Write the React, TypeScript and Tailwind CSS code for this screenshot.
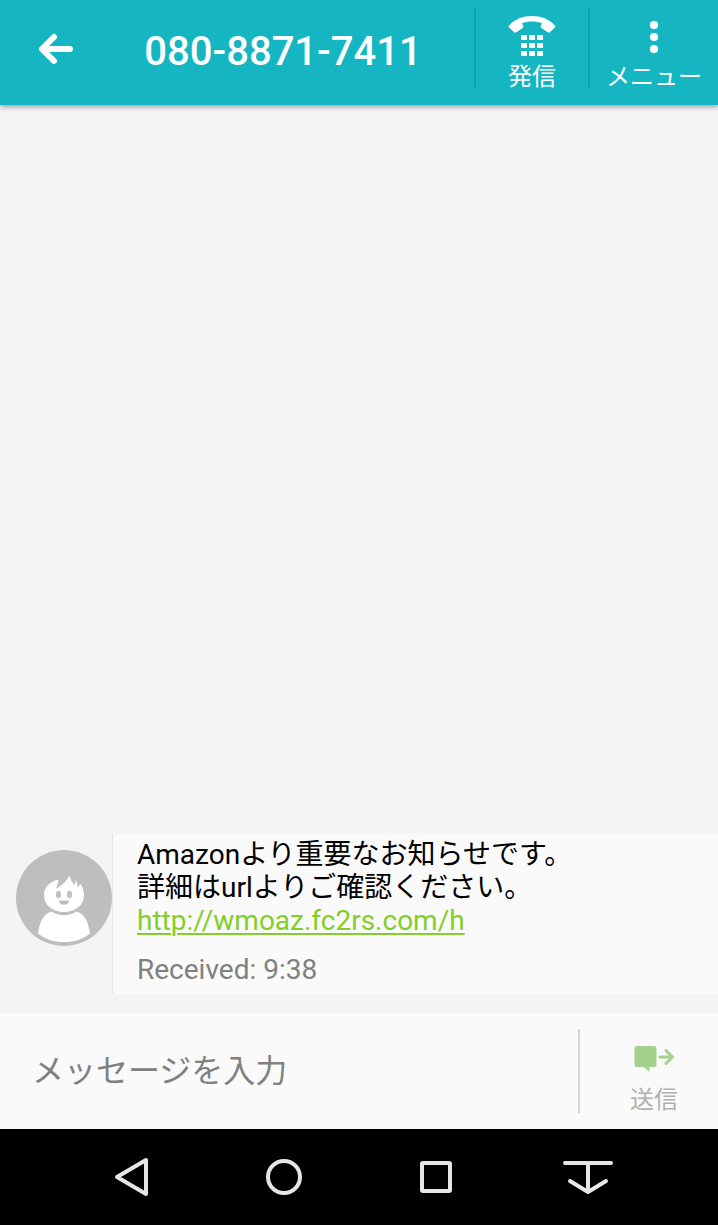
import type { ReactNode } from 'react'

function BackIcon() {
  return (
    <svg className="shrink-0" width="36" height="32" viewBox="0 0 36 32" fill="none" stroke="currentColor" strokeWidth="6" strokeLinecap="round" strokeLinejoin="round" aria-hidden="true">
      <path d="M16 4 4 16l12 12M5 16h27" />
    </svg>
  )
}

function CallIcon() {
  return (
    <svg className="shrink-0" width="48" height="42" viewBox="0 0 48 42" fill="currentColor" aria-hidden="true">
      <path d="M1 9.500C7 3 15 0 24 0s17 3 23 9.500c.6.7.6 1.400-.1 2l-4.800 4.600c-.8.7-1.700.7-2.500.1L33.500 12c-.9-.6-1.100-1.500-.6-2.300L34 7.300C28 4.800 20 4.800 14 7.300l1.100 2.400c.5.8.3 1.700-.6 2.300l-6.100 4.200c-.8.6-1.700.6-2.500-.1L1.100 11.500c-.7-.6-.7-1.300-.1-2Z" />
      {[19, 27, 35].map((y) =>
        [13, 21, 29].map((x) => <rect key={`${x}-${y}`} x={x} y={y} width="6" height="5" />)
      )}
    </svg>
  )
}

function MenuIcon() {
  return (
    <svg className="shrink-0" width="10" height="34" viewBox="0 0 10 34" fill="currentColor" aria-hidden="true">
      <circle cx="5" cy="5" r="4.100" />
      <circle cx="5" cy="17" r="4.100" />
      <circle cx="5" cy="29" r="4.100" />
    </svg>
  )
}

function SendIcon() {
  return (
    <svg className="shrink-0" width="40" height="28" viewBox="0 0 40 28" aria-hidden="true">
      <path d="M3 1h17a2.500 2.500 0 0 1 2.500 2.500v16A2.500 2.500 0 0 1 20 22h-4.500v5L10 22H3A2.500 2.500 0 0 1 .5 19.500v-16A2.500 2.500 0 0 1 3 1Z" fill="#a5d18e" />
      <path d="M26 12h12M32 5.500l6.500 6.500-6.500 6.500" fill="none" stroke="#a5d18e" strokeWidth="3" strokeLinecap="round" />
    </svg>
  )
}

function Avatar() {
  return (
    <svg className="shrink-0" width="96" height="96" viewBox="0 0 96 96" role="img" aria-label="080-8871-7411">
      <circle cx="48" cy="48" r="48" fill="#bebebe" />
      <path d="M36 61.500C39 64 43 65.300 48 65.300S57 64 60 61.500c7 1.500 12 8 14 22C67 89.500 58 92 48 92S29 89.500 22 83.500c2-14 7-20.500 14-22Z" fill="#fff" />
      <path d="M28 45.500c0-8 5-13.500 14.500-16-.5 3.500-1.500 6.500-2.500 9 5.500-2.500 10.500-7 13.500-13 .8 4 2.500 7 5 9.500.8-1.500 1-3.200.7-5 2.200 2.300 3 5 2 8l3.300-4c2.300 3.200 3.500 7 3.500 11.500 0 9.500-8.500 16.500-20 16.500s-20-7-20-16.500Z" fill="#fff" />
      <ellipse cx="42.500" cy="44.500" rx="2.500" ry="3.800" fill="#bebebe" />
      <ellipse cx="53.500" cy="44.500" rx="2.500" ry="3.800" fill="#bebebe" />
      <path d="M43.500 50.500h9c.6 0 .8.500.5 1.200-1 2-2.700 3-5 3s-4-1-5-3c-.3-.7-.1-1.200.5-1.200Z" fill="#bebebe" />
    </svg>
  )
}

function NavButton({ label, children }: { label: string; children: ReactNode }) {
  return (
    <button type="button" aria-label={label} className="flex flex-1 items-center justify-center">
      <svg width="52" height="40" viewBox="0 0 52 40" fill="none" stroke="currentColor" strokeWidth="4" strokeLinecap="round" strokeLinejoin="round" aria-hidden="true">
        {children}
      </svg>
    </button>
  )
}

export default function App() {
  return (
    <div className="flex min-h-screen flex-col bg-[#f4f4f4] font-[Roboto,'Noto_Sans_CJK_JP',sans-serif]">
      <header className="relative flex h-[105px] bg-[#15b6c1] text-white shadow-[0_2px_5px_rgba(0,0,0,0.35)]">
        <button type="button" aria-label="戻る" className="flex w-[92px] items-center pb-2 pl-[38px]">
          <BackIcon />
        </button>
        <h1 className="flex flex-1 items-center justify-center pb-[2px] text-[40px] font-medium whitespace-nowrap">080-8871-7411</h1>
        <div className="mt-2 mb-4 flex">
          <button type="button" className="flex w-[114px] flex-col items-center border-l-2 border-[#0fa3ad] pt-2">
            <CallIcon />
            <span className="text-2xl leading-[38px]">発信</span>
          </button>
          <button type="button" className="flex w-[130px] flex-col items-center border-l-2 border-[#0fa3ad] pt-3">
            <MenuIcon />
            <span className="mt-1 text-2xl leading-[38px]">メニュー</span>
          </button>
        </div>
      </header>

      <main className="flex flex-1 flex-col justify-end pb-[19px]">
        <article className="flex pl-4">
          <div className="pt-4">
            <Avatar />
          </div>
          <div className="flex-1 border-l border-[#e6e6e6] bg-[#fafafa] pt-1 pb-2 pl-6 text-[28px] leading-[33px] text-black">
            <p>Amazonより重要なお知らせです。</p>
            <p>詳細はurlよりご確認ください。</p>
            <a href="#" className="block w-fit text-[#82cf2a] underline decoration-2 underline-offset-3">
              http://wmoaz.fc2rs.com/h
            </a>
            <p className="mt-4 text-[#808080]">Received: 9:38</p>
          </div>
        </article>
      </main>

      <form className="flex h-[116px] bg-[#fafafa] py-4" onSubmit={(e) => e.preventDefault()}>
        <input
          type="text"
          aria-label="メッセージを入力"
          placeholder="メッセージを入力"
          className="min-w-0 flex-1 pl-8 text-[32px] outline-none placeholder:text-[#808080]"
        />
        <button type="submit" className="flex w-[140px] flex-col items-center border-l-2 border-[#d5d5d5] pt-4 pl-[10px]">
          <SendIcon />
          <span className="mt-2 text-2xl leading-[38px] text-[#b0b0b0]">送信</span>
        </button>
      </form>

      <nav className="flex h-24 bg-black pr-[54px] pl-14 text-[#e6e6e6]">
        <NavButton label="戻る">
          <path d="M11 20 40 3v34Z" />
        </NavButton>
        <NavButton label="ホーム">
          <circle cx="26" cy="20" r="16" />
        </NavButton>
        <NavButton label="履歴">
          <rect x="12" y="6" width="28" height="28" rx="1" />
        </NavButton>
        <NavButton label="ナビゲーションバーを隠す">
          <path d="M3 6h46M26 6v29M8 24l18 11 18-11" />
        </NavButton>
      </nav>
    </div>
  )
}
